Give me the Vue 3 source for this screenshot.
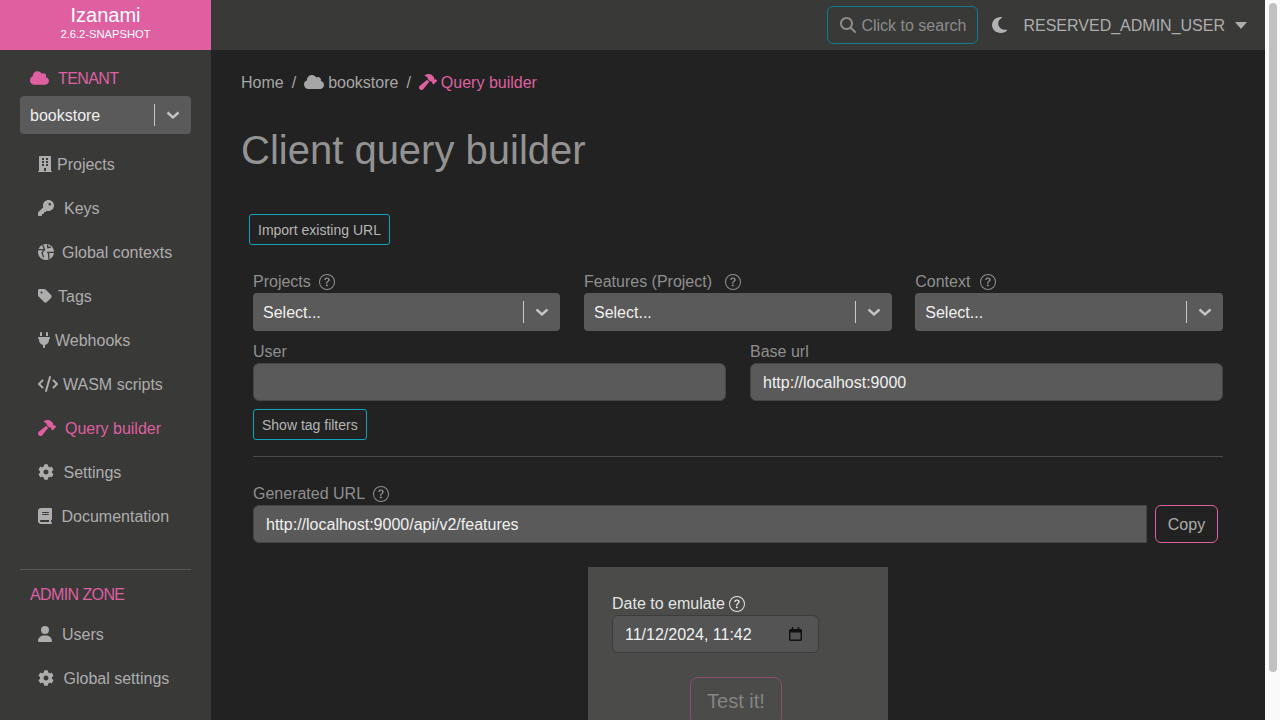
<script setup>
const icons = {
  cloud: ['0 0 640 512', 'M0 336c0 79.5 64.5 144 144 144H512c70.7 0 128-57.3 128-128c0-61.9-44-113.6-102.4-125.4c4.1-10.7 6.4-22.4 6.4-34.6c0-53-43-96-96-96c-19.7 0-38.1 6-53.3 16.2C367 64.2 315.3 32 256 32C167.6 32 96 103.6 96 192c0 2.7 .1 5.4 .2 8.1C40.2 219.8 0 273.2 0 336z'],
  building: ['0 0 448 512', 'M436 480h-20V24c0-13.255-10.745-24-24-24H56C42.745 0 32 10.745 32 24v456H12c-6.627 0-12 5.373-12 12v20h448v-20c0-6.627-5.373-12-12-12zM128 76c0-6.627 5.373-12 12-12h40c6.627 0 12 5.373 12 12v40c0 6.627-5.373 12-12 12h-40c-6.627 0-12-5.373-12-12V76zm0 96c0-6.627 5.373-12 12-12h40c6.627 0 12 5.373 12 12v40c0 6.627-5.373 12-12 12h-40c-6.627 0-12-5.373-12-12v-40zm52 148h-40c-6.627 0-12-5.373-12-12v-40c0-6.627 5.373-12 12-12h40c6.627 0 12 5.373 12 12v40c0 6.627-5.373 12-12 12zm76 160h-64v-84c0-6.627 5.373-12 12-12h40c6.627 0 12 5.373 12 12v84zm64-172c0 6.627-5.373 12-12 12h-40c-6.627 0-12-5.373-12-12v-40c0-6.627 5.373-12 12-12h40c6.627 0 12 5.373 12 12v40zm0-96c0 6.627-5.373 12-12 12h-40c-6.627 0-12-5.373-12-12v-40c0-6.627 5.373-12 12-12h40c6.627 0 12 5.373 12 12v40zm0-96c0 6.627-5.373 12-12 12h-40c-6.627 0-12-5.373-12-12V76c0-6.627 5.373-12 12-12h40c6.627 0 12 5.373 12 12v40z'],
  key: ['0 0 512 512', 'M336 352c97.2 0 176-78.8 176-176S433.2 0 336 0S160 78.8 160 176c0 18.7 2.9 36.8 8.3 53.7L7 391c-4.5 4.5-7 10.6-7 17v80c0 13.3 10.7 24 24 24h80c13.3 0 24-10.7 24-24V448h40c13.3 0 24-10.7 24-24V384h40c6.4 0 12.5-2.5 17-7l33.3-33.3c16.9 5.4 35 8.3 53.7 8.3zM376 96a40 40 0 1 1 0 80 40 40 0 1 1 0-80z'],
  tag: ['0 0 448 512', 'M0 80V229.5c0 17 6.7 33.3 18.7 45.3l176 176c25 25 65.5 25 90.5 0L418.7 317.3c25-25 25-65.5 0-90.5l-176-176c-12-12-28.3-18.7-45.3-18.7H48C21.5 32 0 53.5 0 80zm112 32a32 32 0 1 1 0 64 32 32 0 1 1 0-64z'],
  plug: ['0 0 384 512', 'M96 0C78.3 0 64 14.3 64 32v96h64V32c0-17.7-14.3-32-32-32zM288 0c-17.7 0-32 14.3-32 32v96h64V32c0-17.7-14.3-32-32-32zM32 160c-17.7 0-32 14.3-32 32s14.3 32 32 32v32c0 77.4 55 142 128 156.8V480c0 17.7 14.3 32 32 32s32-14.3 32-32V412.8C297 398 352 333.4 352 256V224c17.7 0 32-14.3 32-32s-14.3-32-32-32H32z'],
  code: ['0 0 640 512', 'M392.8 1.2c-17-4.9-34.7 5-39.6 22l-128 448c-4.9 17 5 34.7 22 39.6s34.7-5 39.6-22l128-448c4.9-17-5-34.7-22-39.6zm80.6 120.1c-12.5 12.5-12.5 32.8 0 45.3L562.7 256l-89.4 89.4c-12.5 12.5-12.5 32.8 0 45.3s32.8 12.5 45.3 0l112-112c12.5-12.5 12.5-32.8 0-45.3l-112-112c-12.5-12.5-32.8-12.5-45.3 0zm-306.7 0c-12.5-12.5-32.8-12.5-45.3 0l-112 112c-12.5 12.5-12.5 32.8 0 45.3l112 112c12.5 12.5 32.8 12.5 45.3 0s12.5-32.8 0-45.3L77.3 256l89.4-89.4c12.5-12.5 12.5-32.8 0-45.3z'],
  hammer: ['0 0 576 512', 'M413.5 237.5c-28.2 4.8-58.2-3.6-80-25.4l-38.1-38.1C280.4 159 272 138.8 272 117.6V105.5L192.3 62c-5.3-2.9-8.6-8.6-8.3-14.7s3.9-11.5 9.5-14l47.2-21C259.1 4.2 279 0 299.2 0h18.1c36.7 0 72 14 98.7 39.1l44.6 42c24.2 22.8 33.2 55.7 26.6 86L503 183l8-8c9.4-9.4 24.6-9.4 33.9 0l24 24c9.4 9.4 9.4 24.6 0 33.9l-88 88c-9.4 9.4-24.6 9.4-33.9 0l-24-24c-9.4-9.4-9.4-24.6 0-33.9l8-8-17.5-17.5zM27.4 377.1L260.9 182.6c3.5 4.9 7.5 9.6 11.8 14l38.1 38.1c6 6 12.4 11.2 19.2 15.7L134.9 484.6c-14.5 17.4-36 27.4-58.6 27.4C34.1 512 0 477.8 0 435.7c0-22.6 10.1-44.1 27.4-58.6z'],
  gear: ['0 0 512 512', 'M487.4 315.7l-42.6-24.6c4.3-23.2 4.3-47 0-70.2l42.6-24.6c4.9-2.8 7.1-8.6 5.5-14-11.1-35.6-30-67.8-54.7-94.6-3.8-4.1-10-5.1-14.8-2.3L380.8 110c-17.9-15.4-38.5-27.3-60.8-35.1V25.8c0-5.6-3.9-10.5-9.4-11.7-36.7-8.2-74.3-7.8-109.2 0-5.5 1.2-9.4 6.1-9.4 11.7V75c-22.2 7.9-42.8 19.8-60.8 35.1L88.7 85.5c-4.9-2.8-11-1.9-14.8 2.3-24.7 26.7-43.6 58.9-54.7 94.6-1.7 5.4.6 11.2 5.5 14L67.3 221c-4.3 23.2-4.3 47 0 70.2l-42.6 24.6c-4.9 2.8-7.1 8.6-5.5 14 11.1 35.6 30 67.8 54.7 94.6 3.8 4.1 10 5.1 14.8 2.3l42.6-24.6c17.9 15.4 38.5 27.3 60.8 35.1v49.2c0 5.6 3.9 10.5 9.4 11.7 36.7 8.2 74.3 7.8 109.2 0 5.5-1.2 9.4-6.1 9.4-11.7v-49.2c22.2-7.9 42.8-19.8 60.8-35.1l42.6 24.6c4.9 2.8 11 1.9 14.8-2.3 24.7-26.7 43.6-58.9 54.7-94.6 1.5-5.5-.7-11.3-5.6-14.1zM256 336c-44.1 0-80-35.9-80-80s35.9-80 80-80 80 35.9 80 80-35.9 80-80 80z'],
  book: ['0 0 448 512', 'M96 0C43 0 0 43 0 96V416c0 53 43 96 96 96H384h32c17.7 0 32-14.3 32-32s-14.3-32-32-32V384c17.7 0 32-14.3 32-32V32c0-17.7-14.3-32-32-32H384 96zm0 384H352v64H96c-17.7 0-32-14.3-32-32s14.3-32 32-32zm32-240c0-8.8 7.2-16 16-16H336c8.8 0 16 7.2 16 16s-7.2 16-16 16H144c-8.8 0-16-7.2-16-16zm16 48H336c8.8 0 16 7.2 16 16s-7.2 16-16 16H144c-8.8 0-16-7.2-16-16s7.2-16 16-16z'],
  user: ['0 0 448 512', 'M224 256A128 128 0 1 0 224 0a128 128 0 1 0 0 256zm-45.7 48C79.8 304 0 383.8 0 482.3C0 498.7 13.3 512 29.7 512H418.3c16.4 0 29.7-13.3 29.7-29.7C448 383.8 368.2 304 269.7 304H178.3z'],
  search: ['0 0 512 512', 'M416 208c0 45.9-14.9 88.3-40 122.7L502.6 457.4c12.5 12.5 12.5 32.8 0 45.3s-32.8 12.5-45.3 0L330.7 376c-34.4 25.2-76.8 40-122.7 40C93.1 416 0 322.9 0 208S93.1 0 208 0S416 93.1 416 208zM208 352a144 144 0 1 0 0-288 144 144 0 1 0 0 288z'],
  moon: ['0 32 384 448', 'M223.5 32C100 32 0 132.3 0 256S100 480 223.5 480c60.6 0 115.5-24.2 155.8-63.4c5-4.9 6.3-12.5 3.1-18.7s-10.1-9.7-17-8.5c-9.8 1.7-19.8 2.6-30.1 2.6c-96.9 0-175.5-78.8-175.5-176c0-65.8 36-123.1 89.3-153.3c6.1-3.5 9.2-10.5 7.7-17.3s-7.3-11.9-14.3-12.5c-6.3-.5-12.6-.8-19-.8z'],
  help: ['0 0 16 16', 'M8 15A7 7 0 1 1 8 1a7 7 0 0 1 0 14zm0 1A8 8 0 1 0 8 0a8 8 0 0 0 0 16zM5.255 5.786a.237.237 0 0 0 .241.247h.825c.138 0 .248-.113.266-.25.09-.656.54-1.134 1.342-1.134.686 0 1.314.343 1.314 1.168 0 .635-.374.927-.965 1.371-.673.489-1.206 1.06-1.168 1.987l.003.217a.25.25 0 0 0 .25.246h.811a.25.25 0 0 0 .25-.25v-.105c0-.718.273-.927 1.01-1.486.609-.463 1.244-.977 1.244-2.056 0-1.511-1.276-2.241-2.673-2.241-1.267 0-2.655.59-2.75 2.286zm1.557 5.763c0 .533.425.927 1.01.927.609 0 1.028-.394 1.028-.927 0-.552-.42-.94-1.029-.94-.584 0-1.009.388-1.009.94z'],
}

const nav = [
  { label: 'Projects', icon: 'building', w: 14, gap: 5 },
  { label: 'Keys', icon: 'key', w: 16, gap: 10 },
  { label: 'Global contexts', icon: 'globe', w: 16, gap: 8 },
  { label: 'Tags', icon: 'tag', w: 14, gap: 6 },
  { label: 'Webhooks', icon: 'plug', w: 12, gap: 5 },
  { label: 'WASM scripts', icon: 'code', w: 20, gap: 5 },
  { label: 'Query builder', icon: 'hammer', w: 18, gap: 9, active: true },
  { label: 'Settings', icon: 'gear', w: 16, gap: 9.5 },
  { label: 'Documentation', icon: 'book', w: 14, gap: 9.5 },
]
const admin = [
  { label: 'Users', icon: 'user', w: 14, gap: 10 },
  { label: 'Global settings', icon: 'gear', w: 16, gap: 9.5 },
]
const selects = [
  { label: 'Projects', gap: 8 },
  { label: 'Features (Project)', gap: 13 },
  { label: 'Context', gap: 10 },
]
</script>

<template>
  <div class="page">
    <div class="viewport">
      <header class="topbar">
        <div class="logo">
          <div class="logo-name">Izanami</div>
          <div class="logo-version">2.6.2-SNAPSHOT</div>
        </div>
        <div class="top-actions">
          <button class="search">
            <svg class="ic search-ic" :viewBox="icons.search[0]"><path :d="icons.search[1]" /></svg>
            <span>Click to search</span>
          </button>
          <svg class="ic moon" :viewBox="icons.moon[0]" preserveAspectRatio="none"><path :d="icons.moon[1]" /></svg>
          <span class="username">RESERVED_ADMIN_USER</span>
          <span class="caret"></span>
        </div>
      </header>

      <div class="body">
        <aside class="sidebar">
          <div class="side-title">
            <svg class="ic cloud" :viewBox="icons.cloud[0]"><path :d="icons.cloud[1]" /></svg>
            <span>TENANT</span>
          </div>
          <div class="select tenant">
            <span class="select-value">bookstore</span>
            <span class="sep"></span>
            <svg class="chev" viewBox="0 0 20 20"><path d="M4.5 7.5 10 12.5 15.5 7.5" /></svg>
          </div>
          <nav class="nav first">
            <a v-for="n in nav" :key="n.label" class="nav-item" :class="{ active: n.active }">
              <svg v-if="n.icon === 'globe'" class="ic" :style="{ width: n.w + 'px', marginRight: n.gap + 'px' }" viewBox="0 0 16 16">
                <circle cx="8" cy="8" r="8" />
                <path class="globe-cut" d="M0 5.6H6.4M4.6 .4 6.6 5.6 4 8.6 5.6 13.4M9 8.4H16M10.4 8.4 11 15.4M9.5 .6 9.8 3.6 12.8 3" />
              </svg>
              <svg v-else class="ic" :style="{ width: n.w + 'px', marginRight: n.gap + 'px' }" :viewBox="icons[n.icon][0]"><path :d="icons[n.icon][1]" /></svg>
              <span>{{ n.label }}</span>
            </a>
          </nav>
          <div class="side-rule"></div>
          <div class="side-title admin"><span>ADMIN ZONE</span></div>
          <nav class="nav second">
            <a v-for="n in admin" :key="n.label" class="nav-item">
              <svg class="ic" :style="{ width: n.w + 'px', marginRight: n.gap + 'px' }" :viewBox="icons[n.icon][0]"><path :d="icons[n.icon][1]" /></svg>
              <span>{{ n.label }}</span>
            </a>
          </nav>
        </aside>

        <main class="main">
          <div class="crumbs">
            <span>Home</span>
            <span class="slash">/</span>
            <svg class="ic crumb-cloud" :viewBox="icons.cloud[0]"><path :d="icons.cloud[1]" /></svg>
            <span>bookstore</span>
            <span class="slash">/</span>
            <svg class="ic crumb-hammer" :viewBox="icons.hammer[0]"><path :d="icons.hammer[1]" /></svg>
            <span class="crumb-active">Query builder</span>
          </div>
          <h1 class="title">Client query builder</h1>

          <section class="builder">
            <button class="btn-small import">Import existing URL</button>
            <div class="form">
              <div class="three">
                <div v-for="s in selects" :key="s.label" class="field">
                  <label class="lbl">
                    {{ s.label }}
                    <svg class="help" :style="{ marginLeft: s.gap + 'px' }" :viewBox="icons.help[0]"><path :d="icons.help[1]" /></svg>
                  </label>
                  <div class="select">
                    <span class="select-value">Select...</span>
                    <span class="sep"></span>
                    <svg class="chev" viewBox="0 0 20 20"><path d="M4.5 7.5 10 12.5 15.5 7.5" /></svg>
                  </div>
                </div>
              </div>
              <div class="two">
                <div class="field">
                  <label class="lbl">User</label>
                  <input class="input" />
                </div>
                <div class="field">
                  <label class="lbl">Base url</label>
                  <input class="input" value="http://localhost:9000" />
                </div>
              </div>
              <button class="btn-small tagbtn">Show tag filters</button>
              <hr class="rule" />
              <label class="lbl">
                Generated URL
                <svg class="help" :style="{ marginLeft: '8px' }" :viewBox="icons.help[0]"><path :d="icons.help[1]" /></svg>
              </label>
              <div class="url-row">
                <input class="input url" value="http://localhost:9000/api/v2/features" />
                <button class="copy">Copy</button>
              </div>
              <div class="panel">
                <label class="panel-lbl">
                  Date to emulate
                  <svg class="help light" :viewBox="icons.help[0]"><path :d="icons.help[1]" /></svg>
                </label>
                <div class="date">
                  <span>11/12/2024, 11:42</span>
                  <svg class="cal" viewBox="0 0 14 15"><path d="M3 0h1.6v2h4.8V0H11v2h1.2A1.8 1.8 0 0 1 14 3.8v9.4a1.8 1.8 0 0 1-1.8 1.8H1.8A1.8 1.8 0 0 1 0 13.2V3.8A1.8 1.8 0 0 1 1.8 2H3V0Zm-1.4 6v7.2c0 .1.1.2.2.2h10.4c.1 0 .2-.1.2-.2V6H1.6Z" /></svg>
                </div>
                <button class="test">Test it!</button>
              </div>
            </div>
          </section>
        </main>
      </div>
    </div>
    <div class="scrollbar"><div class="thumb"></div></div>
  </div>
</template>

<style>
html, body { margin: 0; background: #222; overflow: hidden; }
</style>

<style scoped>
* { box-sizing: border-box; }
.page {
  display: flex;
  width: 1280px;
  height: 720px;
  overflow: hidden;
  font-family: "Liberation Sans", Arial, sans-serif;
  font-size: 16px;
  line-height: 24px;
  color: #adadad;
  background: #222;
}
.viewport { width: 1265px; height: 720px; display: flex; flex-direction: column; overflow: hidden; }
.ic { fill: currentColor; display: block; flex: none; height: 16px; }
.globe-cut { fill: none; stroke: #393938; stroke-width: 1.3; }

/* text sits a pixel lower than its box centre, as in Helvetica */
.nav-item span, .crumbs span, .side-title span, .select-value,
.username, .search span, .date span { padding-top: 2px; }

.topbar { height: 50px; flex: none; display: flex; justify-content: space-between; background: #393938; }
.logo { width: 211px; background: #de60a0; color: #fff; text-align: center; padding-top: 3px; }
.logo-name { font-size: 20px; line-height: 24px; }
.logo-version { font-size: 11.2px; line-height: 15px; }
.top-actions { display: flex; align-items: center; padding-right: 18px; }
.search {
  display: flex; align-items: center; width: 151px; height: 38px; padding: 0 0 0 12px;
  background: transparent; border: 1px solid #0d7c90; border-radius: 6px;
  color: #8c8c8c; font: inherit; white-space: nowrap;
}
.search-ic { width: 16px; margin-right: 5px; }
.moon { width: 15px; height: 16px; margin: 0 16px 0 14px; color: #b3b3b3; }
.username { color: #adadad; }
.caret { width: 0; height: 0; margin-left: 10px; border: 6px solid transparent; border-top: 7px solid #adadad; border-bottom: 0; }

.body { flex: 1; display: flex; min-height: 0; }
.sidebar { width: 211px; flex: none; background: #393938; padding: 16px 20px 0; }
.side-title { display: flex; align-items: center; height: 24px; padding-left: 10px; color: #de60a0; letter-spacing: -0.6px; }
.cloud { width: 19px; margin-right: 9px; }
.side-title.admin { margin-top: 12px; }
.select {
  display: flex; align-items: center; height: 38px; padding: 0 8px 0 10px;
  background: #5a5a5a; border-radius: 4px; color: #f0f0f0;
}
.tenant { margin-top: 6px; }
.select-value { flex: 1; }
.sep { width: 1px; height: 22px; background: #c8c8c8; }
.chev { width: 20px; height: 20px; margin-left: 8px; fill: none; stroke: #c4c4c4; stroke-width: 2.4; }
.nav.first { margin-top: 8px; margin-bottom: 31px; }
.nav.second { margin-top: 6px; }
.nav-item { display: flex; align-items: center; height: 44px; padding-left: 18px; color: #adadad; }
.nav-item.active { color: #de60a0; }
.side-rule { height: 1px; background: #565655; }

.main { flex: 1; min-width: 0; padding: 20px 42px 0 30px; background: #222; overflow: hidden; }
.crumbs { display: flex; align-items: center; height: 24px; color: #a6a6a6; }
.slash { margin: 0 8px; }
.crumb-cloud { width: 20px; margin-right: 4px; }
.crumb-hammer { width: 18px; margin-right: 4px; color: #de60a0; }
.crumb-active { color: #de60a0; }
.title { margin: 32px 0 0; font-size: 40px; line-height: 48px; font-weight: 400; color: #939393; }

.builder { margin-top: 40px; padding-left: 8px; }
.btn-small {
  display: block; height: 31px; padding: 2px 8px 0; background: transparent;
  border: 1px solid #0fa3bd; border-radius: 3px; color: #b5b5b5;
  font: 14px/21px "Liberation Sans", Arial, sans-serif;
}
.form { margin-left: 4px; }
.three { display: grid; grid-template-columns: 307.3px 307.6px 1fr; column-gap: 23.7px; margin-top: 24px; }
.two { display: grid; grid-template-columns: repeat(2, 1fr); gap: 24px; margin-top: 8px; }
.lbl { display: flex; align-items: center; height: 24px; padding-top: 2px; color: #8f8f8f; }
.help { width: 16px; height: 16px; fill: currentColor; display: block; margin-left: 8px; }
.input {
  display: block; width: 100%; height: 38px; padding: 2px 12px 0;
  background: #5a5a5a; border: 1px solid #454545; border-radius: 6px;
  color: #f0f0f0; font: 16px/24px "Liberation Sans", Arial, sans-serif; outline: none;
}
.tagbtn { margin-top: 8px; }
.rule { margin: 16px 0 24px; border: 0; border-top: 1px solid #4a4a4a; }
.url-row { display: flex; }
.url { flex: none; width: 894px; border-radius: 6px 0 0 6px; }
.copy {
  width: 63px; height: 38px; margin-left: 8px; padding: 2px 0 0; background: transparent;
  border: 1px solid #de60a0; border-radius: 6px; color: #adadad;
  font: 16px/24px "Liberation Sans", Arial, sans-serif;
}
.panel { width: 300px; margin: 24px auto 0; padding: 24px 24px 0; height: 160px; background: #4b4b4a; }
.panel-lbl { display: flex; align-items: center; height: 24px; padding-top: 2px; color: #e4e4e4; }
.light { margin-left: 4px; }
.date {
  display: flex; align-items: center; justify-content: space-between;
  width: 207px; height: 38px; padding: 0 16px 0 12px;
  background: #545454; border: 1px solid #3c3c3c; border-radius: 6px; color: #f0f0f0;
}
.cal { width: 13px; height: 14px; fill: #111; display: block; }
.test {
  display: block; width: 92px; height: 48px; margin: 24px 0 0 78px;
  background: transparent; border: 1px solid #8c4f70; border-radius: 8px;
  color: #858585; font: 20px/30px "Liberation Sans", Arial, sans-serif;
}
.scrollbar { width: 15px; height: 720px; flex: none; background: #fafafa; padding: 3px 3px 0 4px; }
.thumb { height: 669px; background: #c1c1c1; border-radius: 4px; }
</style>
